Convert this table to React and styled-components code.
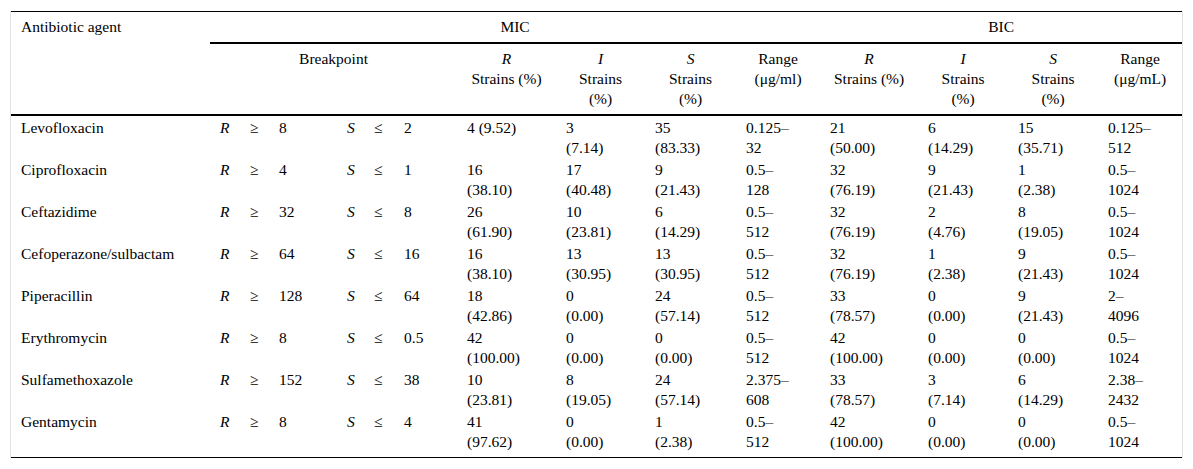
import React from 'react';
import styled, { createGlobalStyle } from 'styled-components';

const GlobalStyle = createGlobalStyle`
  body {
    margin: 0;
    background: #fff;
    font-family: "Liberation Serif", "Times New Roman", serif;
    color: #000;
  }
`;

const Frame = styled.div`
  margin: 11px 0 0 10px;
  width: 1171px;
  border-left: 1px solid #e3e3e3;
  border-right: 1px solid #e3e3e3;
`;

const Table = styled.table`
  width: 1171px;
  border-collapse: collapse;
  table-layout: fixed;
  font-family: "Liberation Serif", "Times New Roman", serif;
  font-size: 15.5px;
  line-height: 20px;
  color: #000;
  border-top: 1px solid #000;
  border-bottom: 1px solid #000;
`;

const HeadCell = styled.th`
  font-weight: normal;
  padding: 5px 10px;
  vertical-align: top;
  text-align: ${({ $left }) => ($left ? 'left' : 'center')};
  border-bottom: ${({ $rule }) => ($rule ? '2px solid #000' : 'none')};
`;

const RuleCell = styled.th`
  padding: 0;
  height: 0;
  border-bottom: 2px solid #000;
`;

const Row = styled.tr`
  &:last-child td {
    padding-bottom: 5px;
  }
`;

const Cell = styled.td`
  padding: 2px 10px 0 10px;
  vertical-align: top;
  text-align: left;
  white-space: nowrap;
  font-weight: normal;
`;

const Em = styled.i`
  font-style: italic;
  font-weight: normal;
`;

const widths = [199, 30, 29, 68, 27, 30, 63, 99, 89, 91, 84, 98, 90, 90, 84];

const rows = [
  ['Levofloxacin', '8', '2', ['4 (9.52)'], ['3', '(7.14)'], ['35', '(83.33)'], ['0.125–', '32'], ['21', '(50.00)'], ['6', '(14.29)'], ['15', '(35.71)'], ['0.125–', '512']],
  ['Ciprofloxacin', '4', '1', ['16', '(38.10)'], ['17', '(40.48)'], ['9', '(21.43)'], ['0.5–', '128'], ['32', '(76.19)'], ['9', '(21.43)'], ['1', '(2.38)'], ['0.5–', '1024']],
  ['Ceftazidime', '32', '8', ['26', '(61.90)'], ['10', '(23.81)'], ['6', '(14.29)'], ['0.5–', '512'], ['32', '(76.19)'], ['2', '(4.76)'], ['8', '(19.05)'], ['0.5–', '1024']],
  ['Cefoperazone/sulbactam', '64', '16', ['16', '(38.10)'], ['13', '(30.95)'], ['13', '(30.95)'], ['0.5–', '512'], ['32', '(76.19)'], ['1', '(2.38)'], ['9', '(21.43)'], ['0.5–', '1024']],
  ['Piperacillin', '128', '64', ['18', '(42.86)'], ['0', '(0.00)'], ['24', '(57.14)'], ['0.5–', '512'], ['33', '(78.57)'], ['0', '(0.00)'], ['9', '(21.43)'], ['2–', '4096']],
  ['Erythromycin', '8', '0.5', ['42', '(100.00)'], ['0', '(0.00)'], ['0', '(0.00)'], ['0.5–', '512'], ['42', '(100.00)'], ['0', '(0.00)'], ['0', '(0.00)'], ['0.5–', '1024']],
  ['Sulfamethoxazole', '152', '38', ['10', '(23.81)'], ['8', '(19.05)'], ['24', '(57.14)'], ['2.375–', '608'], ['33', '(78.57)'], ['3', '(7.14)'], ['6', '(14.29)'], ['2.38–', '2432']],
  ['Gentamycin', '8', '4', ['41', '(97.62)'], ['0', '(0.00)'], ['1', '(2.38)'], ['0.5–', '512'], ['42', '(100.00)'], ['0', '(0.00)'], ['0', '(0.00)'], ['0.5–', '1024']],
];

const Lines = ({ lines }) => {
  const padded = lines.length < 2 ? [...lines, '\u00a0'] : lines;
  return padded.map((l, i) => (
    <React.Fragment key={i}>
      {i > 0 && <br />}
      {l}
    </React.Fragment>
  ));
};

const StatHead = ({ letter, split, unit }) =>
  letter ? (
    <HeadCell>
      <Em>{letter}</Em>
      <br />
      {split ? (
        <>
          Strains
          <br />
          (%)
        </>
      ) : (
        'Strains (%)'
      )}
    </HeadCell>
  ) : (
    <HeadCell>
      Range
      <br />
      {unit}
    </HeadCell>
  );

const App = () => (
  <>
    <GlobalStyle />
    <Frame>
      <Table>
        <colgroup>
          {widths.map((w, i) => (
            <col key={i} style={{ width: w }} />
          ))}
        </colgroup>
        <thead>
          <tr>
            <HeadCell $left rowSpan={2}>
              Antibiotic agent
            </HeadCell>
            <HeadCell $rule colSpan={10}>
              MIC
            </HeadCell>
            <HeadCell $rule colSpan={4}>
              BIC
            </HeadCell>
          </tr>
          <tr>
            <HeadCell colSpan={6}>Breakpoint</HeadCell>
            <StatHead letter="R" />
            <StatHead letter="I" split />
            <StatHead letter="S" split />
            <StatHead unit="(μg/ml)" />
            <StatHead letter="R" />
            <StatHead letter="I" split />
            <StatHead letter="S" split />
            <StatHead unit="(μg/mL)" />
          </tr>
          <tr>
            <RuleCell colSpan={15} />
          </tr>
        </thead>
        <tbody>
          {rows.map(([name, r, s, ...vals]) => (
            <Row key={name}>
              <Cell>{name}</Cell>
              <Cell>
                <Em>R</Em>
              </Cell>
              <Cell>≥</Cell>
              <Cell>{r}</Cell>
              <Cell>
                <Em>S</Em>
              </Cell>
              <Cell>≤</Cell>
              <Cell>{s}</Cell>
              {vals.map((v, i) => (
                <Cell key={i}>
                  <Lines lines={v} />
                </Cell>
              ))}
            </Row>
          ))}
        </tbody>
      </Table>
    </Frame>
  </>
);

export default App;
